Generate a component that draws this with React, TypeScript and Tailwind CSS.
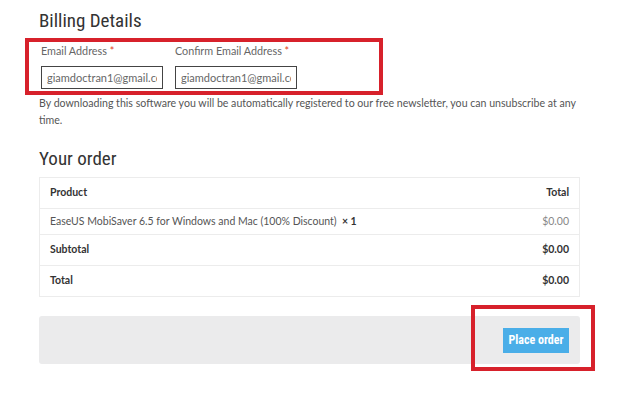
const body = "font-['Lato','Noto_Sans',sans-serif]";
const heading = "font-['Liberation_Sans_Narrow','Roboto_Condensed','Roboto',sans-serif]";

const rows = [
  { label: "Subtotal", value: "$0.00" },
  { label: "Total", value: "$0.00" },
];

function Field({ label, value }: { label: string; value: string }) {
  return (
    <div className="flex w-[122px] flex-col gap-[8px]">
      <label className="text-[10.8px] leading-[14px] text-[#666]">
        {label} <span className="text-[#e2401c]">*</span>
      </label>
      <input
        readOnly
        value={value}
        className={`${body} h-[23px] w-[122px] border border-[#444] bg-white px-[5px] text-[11px] text-[#666] outline-none`}
      />
    </div>
  );
}

export default function App() {
  return (
    <div className={`${body} relative h-[403px] w-[620px] overflow-hidden bg-white pl-[39px] pr-[40px] pt-[10px]`}>
      <h2 className={`${heading} text-[19px] leading-[22px] text-[#333]`}>Billing Details</h2>

      <div className="mt-[12px] flex gap-[12px] pl-[2px]">
        <Field label="Email Address" value="giamdoctran1@gmail.com" />
        <Field label="Confirm Email Address" value="giamdoctran1@gmail.com" />
      </div>

      <p className="mt-[6px] text-[10.6px] leading-[17px] text-[#555]">
        By downloading this software you will be automatically registered to our free newsletter, you can unsubscribe at any time.
      </p>

      <h3 className={`${heading} mt-[19px] text-[19px] leading-[22px] text-[#333]`}>Your order</h3>

      <table className="mt-[7px] w-[541px] border-collapse border border-[#ececec] text-[10.5px] text-[#555]">
        <thead>
          <tr className="h-[31px] border-b border-[#ececec]">
            <th className="px-[10px] text-left font-bold text-[#333]">Product</th>
            <th className="px-[10px] text-right font-bold text-[#333]">Total</th>
          </tr>
        </thead>
        <tbody>
          <tr className="h-[26px] border-b border-[#ececec]">
            <td className="px-[10px]">
              EaseUS MobiSaver 6.5 for Windows and Mac (100% Discount) <span className="font-bold text-[#333]">&nbsp;× 1</span>
            </td>
            <td className="px-[10px] text-right text-[#888]">$0.00</td>
          </tr>
          {rows.map((r) => (
            <tr key={r.label} className="h-[31px] border-b border-[#ececec]">
              <th className="px-[10px] text-left font-bold text-[#333]">{r.label}</th>
              <td className="px-[10px] text-right font-bold text-[#333]">{r.value}</td>
            </tr>
          ))}
        </tbody>
      </table>

      <div className="mt-[19px] flex h-[48px] w-[541px] items-center justify-end rounded-[3px] bg-[#ebebec] pr-[11px]">
        <button className={`${heading} h-[25px] w-[66px] bg-[#4aaee8] text-[12px] font-bold text-white`}>
          Place order
        </button>
      </div>

      {/* annotation boxes */}
      <div className="pointer-events-none absolute left-[25px] top-[38px] h-[57px] w-[358px] border-[4px] border-[#d7212b]" />
      <div className="pointer-events-none absolute left-[471px] top-[305px] h-[66px] w-[124px] border-[4px] border-[#d7212b]" />
    </div>
  );
}
